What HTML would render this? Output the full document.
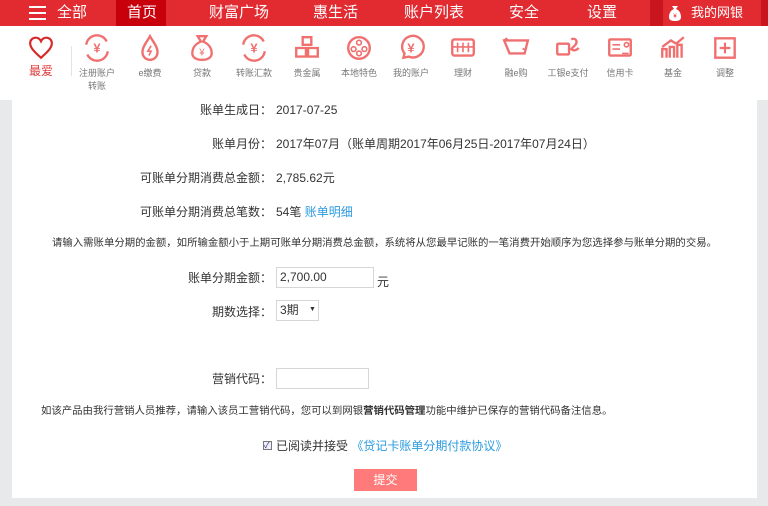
<!DOCTYPE html>
<html><head><meta charset="utf-8"><style>
*{margin:0;padding:0;box-sizing:border-box}
body{width:768px;height:506px;overflow:hidden;background:#e8e9eb;font-family:"Liberation Sans","Noto Sans CJK SC",sans-serif;font-size:12px;color:#333;position:relative}
.top{position:absolute;left:0;top:0;width:768px;height:26px;background:#e22a31}
.top span{position:absolute;top:3px;color:#fff;font-size:15px;line-height:20px}
.home{position:absolute;left:116px;top:0;width:50px;height:26px;background:#c8000c}
.mine{position:absolute;left:650px;top:0;width:118px;height:29px;background:#c9151d}
.mine2{position:absolute;left:663px;top:0;width:98px;height:29px;background:#e22a31}
.menu{position:absolute;left:0;top:26px;width:768px;height:74px;background:#fff}
.it{position:absolute;top:8px;width:60px;text-align:center;font-size:9px;color:#777;line-height:13px}
.it svg{display:block;margin:0 auto 5px}
.panel{position:absolute;left:12px;top:100px;width:745px;height:398px;background:#fff}
.r{position:absolute;white-space:nowrap;line-height:14px}
.lab{right:496px;text-align:right}
.val{left:276px}
a{color:#2b9be0;text-decoration:none}
.inp{position:absolute;border:1px solid #d6d6d6;background:#fff;font-size:12px;padding-left:3px;line-height:18px}
</style></head><body>
<div class="top">
 <div class="home"></div><div class="mine"></div><div class="mine2"></div>
 <div style="position:absolute;left:29px;top:6px;width:17px;height:2px;background:#fff;box-shadow:0 6px 0 #fff,0 12px 0 #fff"></div>
 <span style="left:57px">全部</span>
 <span style="left:127px">首页</span>
 <span style="left:209px">财富广场</span>
 <span style="left:313px">惠生活</span>
 <span style="left:404px">账户列表</span>
 <span style="left:509px">安全</span>
 <span style="left:587px">设置</span>
 <svg style="position:absolute;left:668px;top:5px" width="14" height="17" viewBox="0 0 14 17"><path d="M4 1h6l-2 3c3 1 5 4 5 8 0 3-2 4-6 4s-6-1-6-4c0-4 2-7 5-8z" fill="#fff"/><text x="7" y="13" font-size="6" fill="#e22a31" text-anchor="middle">¥</text></svg>
 <span style="left:691px;font-size:13px">我的网银</span>
</div>
<div class="menu">
 <div style="position:absolute;left:71px;top:20px;width:1px;height:30px;background:#e3e3e3"></div>
 <div class="it" style="left:11px;top:10px;color:#e03b3b;font-size:12px"><svg width="26" height="24" viewBox="0 0 24 22"><path d="M12 20C4 13 2 10 2 6.5 2 3.5 4.5 1.5 7 1.5c2 0 4 1.3 5 3.3 1-2 3-3.3 5-3.3 2.5 0 5 2 5 5 0 3.5-2 6.5-10 13.5z" fill="none" stroke="#d62a2a" stroke-width="2"/></svg>最爱</div>
 <div class="it" style="left:67px"><svg width="28" height="28" viewBox="0 0 26 26"><path d="M3 10a10 10 0 0 1 19-3M23 16a10 10 0 0 1-19 3" fill="none" stroke="#f07070" stroke-width="2.2"/><text x="13" y="17" font-size="12" font-weight="bold" fill="#f07070" text-anchor="middle">¥</text></svg>注册账户<br>转账</div>
 <div class="it" style="left:120px"><svg width="28" height="28" viewBox="0 0 26 26"><path d="M13 2C9 9 6 12 6 17a7 7 0 0 0 14 0c0-5-3-8-7-15z" fill="none" stroke="#f07070" stroke-width="2.2"/><path d="M14 11l-3 5h3l-2 4" fill="none" stroke="#f07070" stroke-width="1.5"/></svg>e缴费</div>
 <div class="it" style="left:172px"><svg width="28" height="28" viewBox="0 0 26 26"><path d="M9 2h8l-3 5c5 2 8 6 8 11 0 4-4 6-9 6s-9-2-9-6c0-5 3-9 8-11z" fill="none" stroke="#f07070" stroke-width="2.2"/><text x="13" y="20" font-size="9" fill="#f07070" text-anchor="middle">¥</text></svg>贷款</div>
 <div class="it" style="left:224px"><svg width="28" height="28" viewBox="0 0 26 26"><path d="M3 10a10 10 0 0 1 19-3M23 16a10 10 0 0 1-19 3" fill="none" stroke="#f07070" stroke-width="2.2"/><text x="13" y="17" font-size="12" font-weight="bold" fill="#f07070" text-anchor="middle">¥</text></svg>转账汇款</div>
 <div class="it" style="left:277px"><svg width="28" height="28" viewBox="0 0 26 26"><path d="M9 3h8v7H9zM3 13h9v8H3zM14 13h9v8h-9z" fill="none" stroke="#f07070" stroke-width="2.2"/></svg>贵金属</div>
 <div class="it" style="left:329px"><svg width="28" height="28" viewBox="0 0 26 26"><circle cx="13" cy="13" r="10" fill="none" stroke="#f07070" stroke-width="2.2"/><circle cx="13" cy="8" r="2.2" fill="none" stroke="#f07070" stroke-width="1.5"/><circle cx="8" cy="14" r="2.2" fill="none" stroke="#f07070" stroke-width="1.5"/><circle cx="18" cy="14" r="2.2" fill="none" stroke="#f07070" stroke-width="1.5"/><circle cx="13" cy="18" r="2.2" fill="none" stroke="#f07070" stroke-width="1.5"/></svg>本地特色</div>
 <div class="it" style="left:381px"><svg width="28" height="28" viewBox="0 0 26 26"><path d="M6 22l1-4a10 10 0 1 1 4 3z" fill="none" stroke="#f07070" stroke-width="2.2"/><text x="13" y="17" font-size="12" font-weight="bold" fill="#f07070" text-anchor="middle">¥</text></svg>我的账户</div>
 <div class="it" style="left:433px"><svg width="28" height="28" viewBox="0 0 26 26"><rect x="3" y="5" width="20" height="15" rx="2" fill="none" stroke="#f07070" stroke-width="2.2"/><path d="M3 12h20M8 8v9M13 8v9M18 8v9" stroke="#f07070" stroke-width="1.5"/></svg>理财</div>
 <div class="it" style="left:486px"><svg width="28" height="28" viewBox="0 0 26 26"><path d="M2 6h22l-3 12H7zM2 6l3-2" fill="none" stroke="#f07070" stroke-width="2.2"/><circle cx="20" cy="14" r="1" fill="#f07070"/></svg>融e购</div>
 <div class="it" style="left:538px"><svg width="28" height="28" viewBox="0 0 26 26"><rect x="3" y="9" width="11" height="10" rx="1" fill="none" stroke="#f07070" stroke-width="2.2"/><path d="M16 5c4-2 7 2 3 6l-3 3c2 2 5 1 7-1" fill="none" stroke="#f07070" stroke-width="2.2"/></svg>工银e支付</div>
 <div class="it" style="left:590px"><svg width="28" height="28" viewBox="0 0 26 26"><rect x="3" y="5" width="20" height="15" rx="1" fill="none" stroke="#f07070" stroke-width="2.2"/><path d="M6 10h7M6 14h7M15 18h6M17 10a2 2 0 1 0 4 0 2 2 0 1 0-4 0" fill="none" stroke="#f07070" stroke-width="1.5"/></svg>信用卡</div>
 <div class="it" style="left:643px"><svg width="28" height="28" viewBox="0 0 26 26"><path d="M3 22v-8h4v8M10 22v-10h4v10M17 22v-12h4v12M3 12l8-6 5 3 7-6" fill="none" stroke="#f07070" stroke-width="2.2"/></svg>基金</div>
 <div class="it" style="left:695px"><svg width="28" height="28" viewBox="0 0 26 26"><rect x="4" y="4" width="18" height="18" fill="none" stroke="#f07070" stroke-width="2.2"/><path d="M13 8v10M8 13h10" stroke="#f07070" stroke-width="2"/></svg>调整</div>
</div>
<div class="panel"></div>
<div class="r lab" style="top:103px">账单生成日：</div><div class="r val" style="top:103px">2017-07-25</div>
<div class="r lab" style="top:137px">账单月份：</div><div class="r val" style="top:137px">2017年07月（账单周期2017年06月25日-2017年07月24日）</div>
<div class="r lab" style="top:171px">可账单分期消费总金额：</div><div class="r val" style="top:171px">2,785.62元</div>
<div class="r lab" style="top:205px">可账单分期消费总笔数：</div><div class="r val" style="top:205px">54笔 <a>账单明细</a></div>
<div class="r" style="left:52px;top:237px;font-size:10.4px">请输入需账单分期的金额，如所输金额小于上期可账单分期消费总金额，系统将从您最早记账的一笔消费开始顺序为您选择参与账单分期的交易。</div>
<div class="r lab" style="top:271px">账单分期金额：</div>
<div class="inp" style="left:276px;top:267px;width:98px;height:21px">2,700.00</div>
<div class="r" style="left:377px;top:275px">元</div>
<div class="r lab" style="top:305px">期数选择：</div>
<div class="inp" style="left:276px;top:300px;width:43px;height:21px">3期<span style="position:absolute;left:32px;top:0;font-size:7px">▼</span></div>
<div class="r lab" style="top:372px">营销代码：</div>
<div class="inp" style="left:276px;top:368px;width:93px;height:21px"></div>
<div class="r" style="left:41px;top:405px;font-size:10.4px">如该产品由我行营销人员推荐，请输入该员工营销代码，您可以到网银<b>营销代码管理</b>功能中维护已保存的营销代码备注信息。</div>
<div style="position:absolute;left:263px;top:441px;width:9px;height:9px;border:1px solid #777;background:#eef;font-size:8px;line-height:8px;color:#335">✓</div>
<div class="r" style="left:276px;top:439px">已阅读并接受 <a>《贷记卡账单分期付款协议》</a></div>
<div style="position:absolute;left:354px;top:469px;width:63px;height:22px;background:#ff7a7a;color:#fff;text-align:center;line-height:22px">提交</div>
</body></html>
